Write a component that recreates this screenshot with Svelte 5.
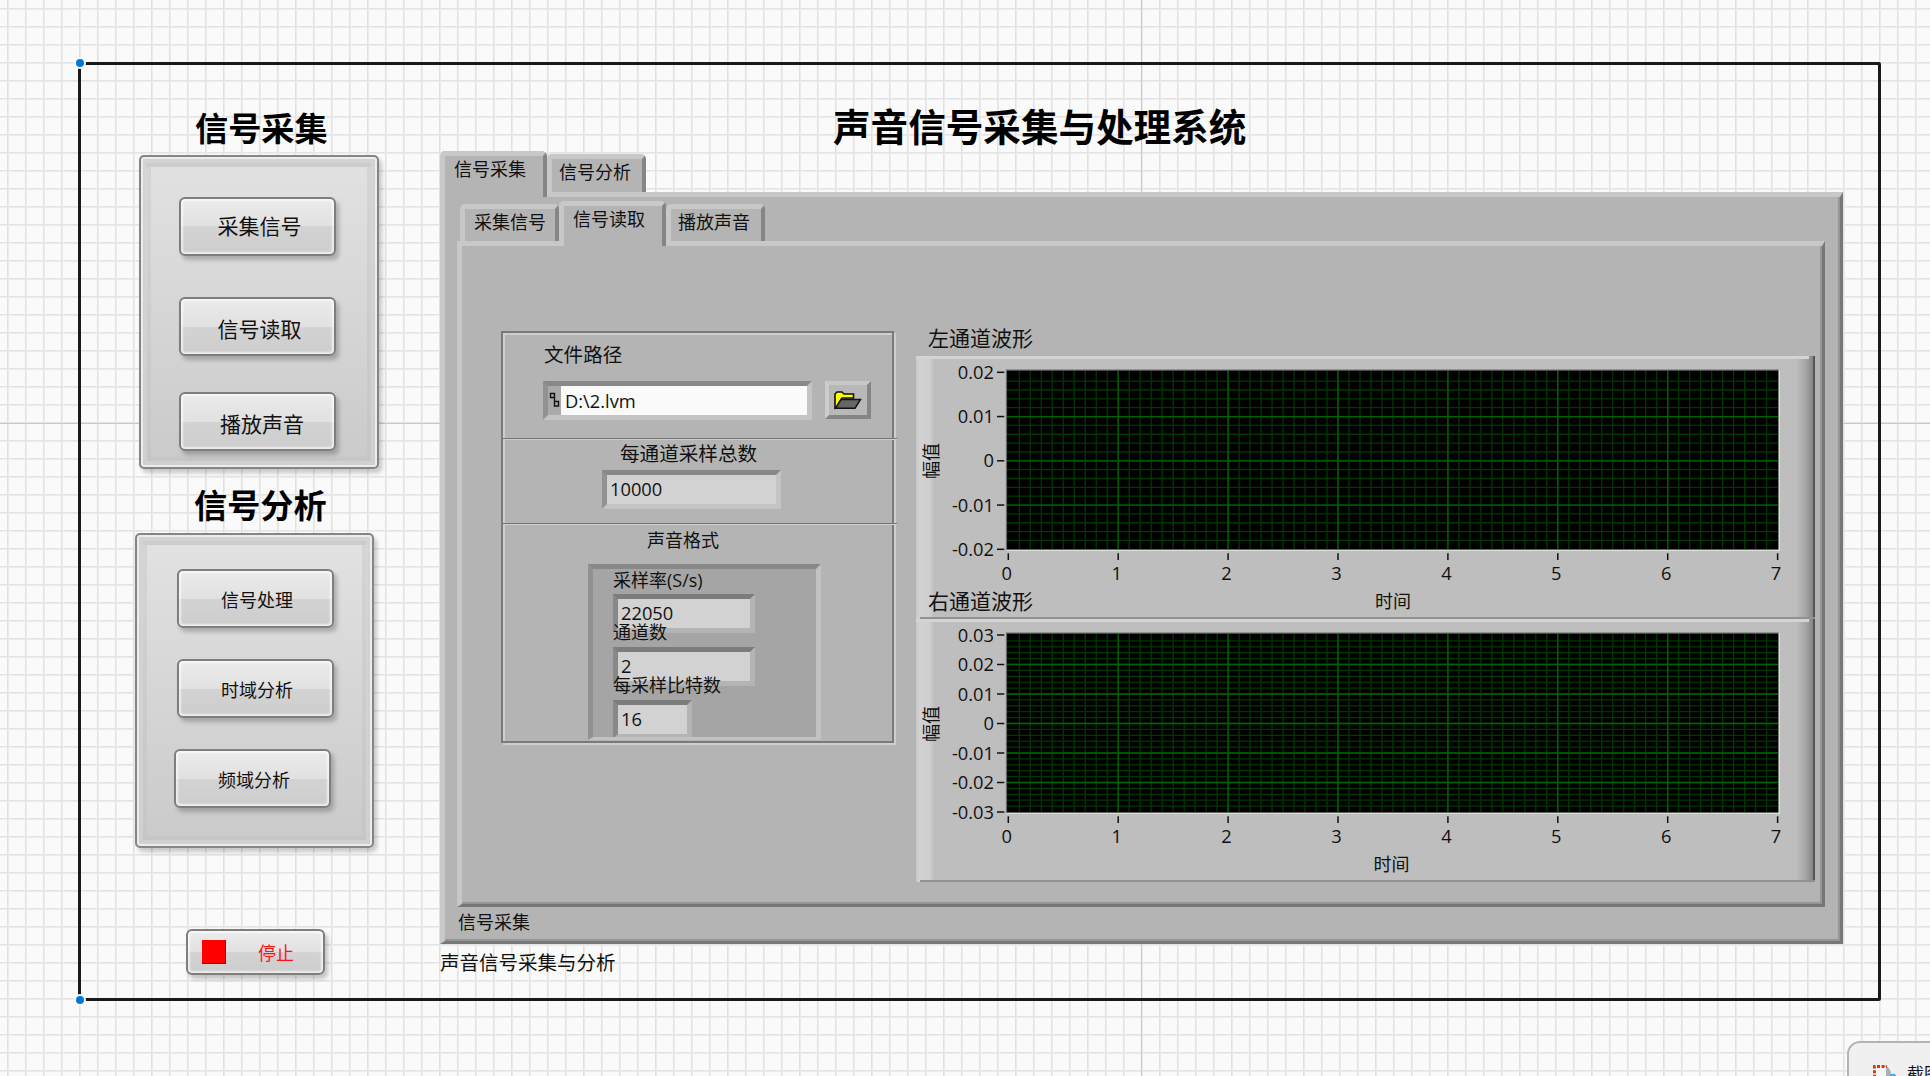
<script>
  let outerTabs = ['信号采集', '信号分析'];
  let innerTabs = ['采集信号', '信号读取', '播放声音'];
  let activeOuter = 0;
  let activeInner = 1;

  let captureButtons = ['采集信号', '信号读取', '播放声音'];
  let analysisButtons = ['信号处理', '时域分析', '频域分析'];

  let filePath = 'D:\\2.lvm';
  let samples = '10000';
  let format = [
    { label: '采样率(S/s)', value: '22050', size: 'wide' },
    { label: '通道数', value: '2', size: 'wide' },
    { label: '每采样比特数', value: '16', size: 'narrow' }
  ];

  let graphs = [
    { title: '左通道波形', ticks: ['0.02', '0.01', '0', '-0.01', '-0.02'], top: 16.3, timeX: 477 },
    { title: '右通道波形', ticks: ['0.03', '0.02', '0.01', '0', '-0.01', '-0.02', '-0.03'], top: 16, timeX: 475.5 }
  ];

  const X0 = 92.3;
  const STEP_X = 109.9;
  const PLOT_H = 177;

  // Minor grid line positions, five divisions per major tick
  function minorY(graph) {
    const n = (graph.ticks.length - 1) * 5;
    return Array.from({ length: n - 1 }, (_, i) => graph.top + ((i + 1) * PLOT_H) / n);
  }

  function majorY(graph, i) {
    return graph.top + (i * PLOT_H) / (graph.ticks.length - 1);
  }

  const minorX = Array.from({ length: 69 }, (_, i) => X0 + ((i + 1) * STEP_X) / 10);
  const majorX = [0, 1, 2, 3, 4, 5, 6, 7];
</script>

<div class="canvas">
  <div class="frame">
    <span class="handle top"></span>
    <span class="handle bottom"></span>

    <aside>
      <h2>信号采集</h2>
      <div class="group capture">
        {#each captureButtons as label}
          <button on:click={() => (activeInner = captureButtons.indexOf(label))}>{label}</button>
        {/each}
      </div>

      <h2 class="second">信号分析</h2>
      <div class="group analysis">
        {#each analysisButtons as label}
          <button on:click={() => (activeOuter = 1)}>{label}</button>
        {/each}
      </div>

      <button class="stop"><i></i><span>停止</span></button>
    </aside>

    <main>
      <h1>声音信号采集与处理系统</h1>

      <div class="tabs">
        {#each outerTabs as tab, i}
          <div class="tab" class:active={i === activeOuter}>{tab}</div>
        {/each}
      </div>

      <div class="outer">
        <div class="tabs inner-tabs">
          {#each innerTabs as tab, i}
            <div class="tab" class:active={i === activeInner}>{tab}</div>
          {/each}
        </div>

        <div class="inner">
          <div class="file-box">
            <section class="path">
              <div class="label">文件路径</div>
              <div class="row">
                <div class="field path-field">
                  <svg width="13" height="29" viewBox="0 0 13 29">
                    <path d="M2.5 7.5h4v4h-4zM6.5 9.5v8M6.5 15.5h4v4.5h-4z" fill="none" stroke="#111" stroke-width="1.4" />
                  </svg>
                  <span>{filePath}</span>
                </div>
                <div class="browse">
                  <svg width="28" height="20" viewBox="0 0 28 20">
                    <path d="M1 18V4L3 2h5l2 2h9.5V8H8L2.5 17z" fill="#ffff00" stroke="#111" stroke-width="1.6" />
                    <path d="M1.5 18.3L7 9.5H26.5l-5.5 8.8z" fill="#666" stroke="#111" stroke-width="1.5" />
                  </svg>
                </div>
              </div>
            </section>

            <section class="total">
              <div class="label">每通道采样总数</div>
              <div class="field">{samples}</div>
            </section>

            <section class="format">
              <div class="label">声音格式</div>
              <div class="cluster">
                {#each format as item}
                  <div class="small-label">{item.label}</div>
                  <div class="field {item.size}">{item.value}</div>
                {/each}
              </div>
            </section>
          </div>

          <div class="graphs">
            {#each graphs as graph}
              <div class="graph-title">{graph.title}</div>
              <div class="graph">
                <svg width="899" height="263" viewBox="0 0 899 263">
                  <rect x="90.3" y="14" width="772.4" height="179.7" fill="#000" />
                  <g stroke="#003800" stroke-width="1.3">
                    {#each minorX as x}
                      <line x1={x} x2={x} y1="14.5" y2="193.5" />
                    {/each}
                    {#each minorY(graph) as y}
                      <line x1="91" x2="862.7" y1={y} y2={y} />
                    {/each}
                  </g>
                  <g stroke="#006400" stroke-width="1.3">
                    {#each majorX.slice(1, 7) as n}
                      <line x1={X0 + n * STEP_X} x2={X0 + n * STEP_X} y1="14.5" y2="193.5" />
                    {/each}
                    {#each graph.ticks.slice(1, -1) as _, i}
                      <line x1="91" x2="862.7" y1={majorY(graph, i + 1)} y2={majorY(graph, i + 1)} />
                    {/each}
                  </g>
                  <path d="M90.5 194V14.2H862.7" fill="none" stroke="#666" stroke-width="1.2" />
                  <path d="M90.5 194.4H863.3V14" fill="none" stroke="#dedede" stroke-width="1.4" />

                  {#each graph.ticks as tick, i}
                    <line class="tick" x1="81" x2="88.3" y1={majorY(graph, i)} y2={majorY(graph, i)} />
                    <text x="78" y={majorY(graph, i) + 6.5} text-anchor="end">{tick}</text>
                  {/each}
                  {#each majorX as n}
                    <line class="tick" x1={X0 + n * STEP_X} x2={X0 + n * STEP_X} y1="197.3" y2="204" />
                    <text x={X0 + n * STEP_X - 1.5} y="223.7" text-anchor="middle">{n}</text>
                  {/each}
                  <text class="axis" x={graph.timeX} y="252.3" text-anchor="middle">时间</text>
                  <text class="axis" transform="translate(22.3 105) rotate(-90)" text-anchor="middle">幅值</text>
                </svg>
              </div>
            {/each}
          </div>
        </div>

        <div class="page-label">信号采集</div>
      </div>

      <div class="caption">声音信号采集与分析</div>
    </main>
  </div>

  <div class="toast">
    <svg width="26" height="22" viewBox="0 0 26 22">
      <path d="M12 1q6 2 6 8v13h-6z" fill="#a9b0b6" />
      <rect x="2" y="2" width="11" height="20" fill="#f4f4f4" />
      <path d="M1.5 22V1.5H14" fill="none" stroke="#d83b01" stroke-width="3" stroke-dasharray="3 1.6" />
      <circle cx="20" cy="12" r="2.4" fill="none" stroke="#2aa7e8" stroke-width="1.6" />
    </svg>
    <span>截图工具</span>
  </div>
</div>

<style>
  :global(body) {
    margin: 0;
    overflow: hidden;
  }

  .canvas {
    position: relative;
    box-sizing: border-box;
    width: 1930px;
    height: 1076px;
    padding: 62px 48px 75px 78px;
    overflow: hidden;
    color: #111;
    font: 18px/24px "Open Sans", "Noto Sans CJK SC", sans-serif;
    background-color: #fafafa;
    background-image:
      linear-gradient(#c8c8c8, #c8c8c8),
      linear-gradient(#c8c8c8, #c8c8c8),
      linear-gradient(90deg, transparent 7px, #e2e2e2 7px, #e2e2e2 8px, #ececec 8px, #ececec 9px, transparent 9px),
      linear-gradient(transparent 8px, #e4e4e4 8px, #e4e4e4 9px, #ebebeb 9px, #ebebeb 10px, transparent 10px);
    background-size: 1px 100%, 100% 1px, 18px 18px, 18px 18px;
    background-position: 1141px 0, 0 423px, 0 0, 0 0;
    background-repeat: no-repeat, no-repeat, repeat, repeat;
  }

  .frame {
    position: relative;
    display: flex;
    box-sizing: border-box;
    width: 1803px;
    height: 939px;
    border: 3px solid #1a1a1a;
    border-radius: 2px;
  }

  .handle {
    position: absolute;
    left: -5px;
    width: 8px;
    height: 8px;
    border-radius: 50%;
    background: #0078d7;
    box-shadow: 0 0 0 2px #fafafa;
  }

  .handle.top {
    top: -6px;
  }

  .handle.bottom {
    bottom: -6px;
  }

  aside {
    width: 359px;
    flex: none;
  }

  h1,
  h2 {
    margin: 0;
    color: #000;
    font-weight: bold;
    white-space: nowrap;
  }

  h2 {
    margin: 42px 0 4px 114px;
    font-size: 33.2px;
    line-height: 44px;
  }

  h2.second {
    margin: 15px 0 5px 113px;
  }

  .group {
    display: flex;
    flex-direction: column;
    align-items: flex-start;
    box-sizing: border-box;
    width: 239px;
    height: 314px;
    border: 2px solid #858585;
    border-radius: 5px;
    background: linear-gradient(#e2e2e2, #cacaca);
    box-shadow:
      inset 0 0 0 2px #ececec,
      inset 0 0 0 6px rgba(215, 215, 215, 0.6),
      inset 0 6px 0 4px rgba(190, 190, 190, 0.35),
      inset 0 0 0 10px rgba(190, 190, 190, 0.35),
      3px 4px 4px rgba(0, 0, 0, 0.2);
  }

  .capture {
    width: 240px;
    margin-left: 58px;
    padding: 40px 0 0 38px;
  }

  .analysis {
    height: 315px;
    margin-left: 54px;
    padding: 34px 0 0 40px;
  }

  button {
    box-sizing: border-box;
    flex: none;
    width: 157px;
    height: 59px;
    padding: 0;
    border: 2px solid #7e7e7e;
    border-radius: 6px;
    color: #111;
    font: inherit;
    background: linear-gradient(#ebebeb, #e1e1e1 50%, #d3d3d3 50%, #cdcdcd);
    box-shadow:
      inset 0 0 2px 2px rgba(255, 255, 255, 0.65),
      3px 4px 4px rgba(0, 0, 0, 0.22);
  }

  .capture button {
    margin-bottom: 41px;
    padding: 0 0 2px 4px;
    font-size: 21px;
  }

  .capture button:nth-child(2) {
    margin-bottom: 36px;
    padding: 4px 0 0 4px;
  }

  .capture button:nth-child(3) {
    padding: 4px 0 0 9px;
  }

  .analysis button {
    margin-bottom: 31px;
    padding: 3px 0 0 3px;
  }

  .analysis button:last-child {
    margin-left: -3px;
  }

  .stop {
    display: flex;
    align-items: center;
    width: 139px;
    height: 46px;
    margin: 81px 0 0 105px;
    padding-left: 14px;
    color: #ff1414;
  }

  .stop i {
    width: 24px;
    height: 24px;
    margin-right: 32px;
    background: #f00;
    box-shadow: inset -1px -1px #a00;
  }

  .stop span {
    padding-top: 2px;
  }

  h1 {
    height: 49px;
    margin: 37px 0 0 393px;
    font-size: 37.6px;
    line-height: 49px;
  }

  .tabs {
    display: flex;
    align-items: flex-end;
    height: 41px;
  }

  .inner-tabs {
    height: 40px;
    margin-left: 15px;
  }

  .tab {
    box-sizing: border-box;
    width: 99px;
    height: 38px;
    padding: 1px 0 0 7px;
    border: solid #c8c8c8;
    border-width: 5px 4px 0 5px;
    border-right-color: #858585;
    border-radius: 5px 5px 0 0;
    background: #b4b4b4;
    white-space: nowrap;
  }

  .inner-tabs .tab {
    height: 37px;
  }

  .inner-tabs .tab:first-child {
    padding-left: 9px;
  }

  .tab.active {
    position: relative;
    width: 107px;
    height: 46px;
    margin-bottom: -5px;
    padding-left: 9px;
  }

  .inner-tabs .tab.active {
    height: 45px;
  }

  .outer,
  .inner {
    box-sizing: border-box;
    border: solid #c8c8c8;
    border-width: 5px 3px 3px 5px;
    border-right-color: #777;
    border-bottom-color: #777;
    background: #b4b4b4;
    box-shadow: inset -2px -2px 1px #959595;
  }

  .outer {
    width: 1403px;
    height: 752px;
    padding-top: 4px;
  }

  .inner {
    display: flex;
    width: 1368px;
    height: 666px;
    margin-left: 12px;
    padding: 79px 0 0 39px;
  }

  .page-label {
    margin: 3px 0 0 13px;
  }

  .caption {
    margin-top: 7px;
    font-size: 19.5px;
  }

  .file-box {
    box-sizing: border-box;
    width: 393px;
    height: 412px;
    margin: 6px 22px 0 0;
    border: 2px solid #7a7a7a;
    box-shadow: inset 2px 2px #cecece, 2px 2px #cecece;
  }

  section {
    display: flex;
    flex-direction: column;
    box-sizing: border-box;
  }

  .label {
    font-size: 19.6px;
    line-height: 26px;
  }

  .path,
  .total {
    width: 394px;
    border-bottom: 1px solid #757575;
    box-shadow: 0 1px #cecece;
  }

  .path {
    height: 106px;
    padding: 9px 0 0 41px;
  }

  .row {
    display: flex;
    gap: 13px;
    margin: 13px 0 0 -1px;
  }

  .field {
    box-sizing: border-box;
    height: 39px;
    padding: 1px 0 0 3px;
    border: 5px solid;
    border-color: #888 #c4c4c4 #c4c4c4 #929292;
    background: #d2d2d2;
    font-size: 18.3px;
    line-height: 25px;
  }

  .path-field {
    display: flex;
    width: 269px;
    padding: 0;
    background: #fafafa;
    line-height: 29px;
  }

  .path-field svg {
    margin-right: 4px;
    background: #aaa;
  }

  .browse {
    display: flex;
    align-items: center;
    justify-content: center;
    box-sizing: border-box;
    width: 46px;
    height: 38px;
    border: 4px solid;
    border-color: #c8c8c8 #858585 #858585 #cdcdcd;
    background: #b8b8b8;
  }

  .total {
    height: 85px;
    padding-top: 2px;
  }

  .total .label {
    padding-left: 117px;
  }

  .total .field {
    width: 179px;
    margin: 3px 0 0 99px;
  }

  .format .label {
    padding: 3px 0 0 144px;
    font-size: 18px;
  }

  .cluster {
    box-sizing: border-box;
    width: 233px;
    height: 176px;
    margin: 11px 0 0 85px;
    padding-left: 20px;
    overflow: hidden;
    border: 5px solid;
    border-color: #888 #c2c2c2 #c2c2c2 #929292;
    border-bottom-width: 3px;
    background: #a5a5a5;
  }

  .small-label {
    position: relative;
    margin-bottom: 3px;
    line-height: 22px;
  }

  .field + .small-label {
    margin-top: -12px;
    margin-bottom: 4px;
  }

  .cluster .field {
    border-color: #7c7c7c #b4b4b4 #b4b4b4 #888;
  }

  .wide {
    width: 142px;
  }

  .narrow {
    width: 79px;
  }

  .graph-title {
    position: relative;
    margin: -1px 0 4px 12px;
    font-size: 21px;
    line-height: 28px;
  }

  .graph + .graph-title {
    margin-top: -32px;
  }

  .graph {
    box-sizing: border-box;
    width: 899px;
    height: 263px;
    background:
      linear-gradient(#d4d4d4, #d4d4d4) 0 0 / 893px 3px no-repeat,
      linear-gradient(#929292, #929292) 4px 100% / 895px 2px no-repeat,
      linear-gradient(90deg, #c6c6c6, #d2d2d2 3px, #cecece 14px, #bebebe 18px, #bebebe 880px, #a8a8a8 889px, #858585 897px, #555 897px);
  }

  .graph svg {
    display: block;
  }

  .tick {
    stroke: #111;
    stroke-width: 1.5;
  }

  text {
    fill: #111;
    font-size: 18.3px;
  }

  .axis {
    font-size: 18px;
  }

  .toast {
    position: absolute;
    left: 1847px;
    top: 1041px;
    display: flex;
    gap: 8px;
    width: 200px;
    height: 80px;
    padding: 22px 0 0 24px;
    border: 2px solid #b4b4b4;
    border-radius: 13px;
    background: #f0f0f0;
    font-size: 17px;
    line-height: 18px;
    white-space: nowrap;
  }
</style>
